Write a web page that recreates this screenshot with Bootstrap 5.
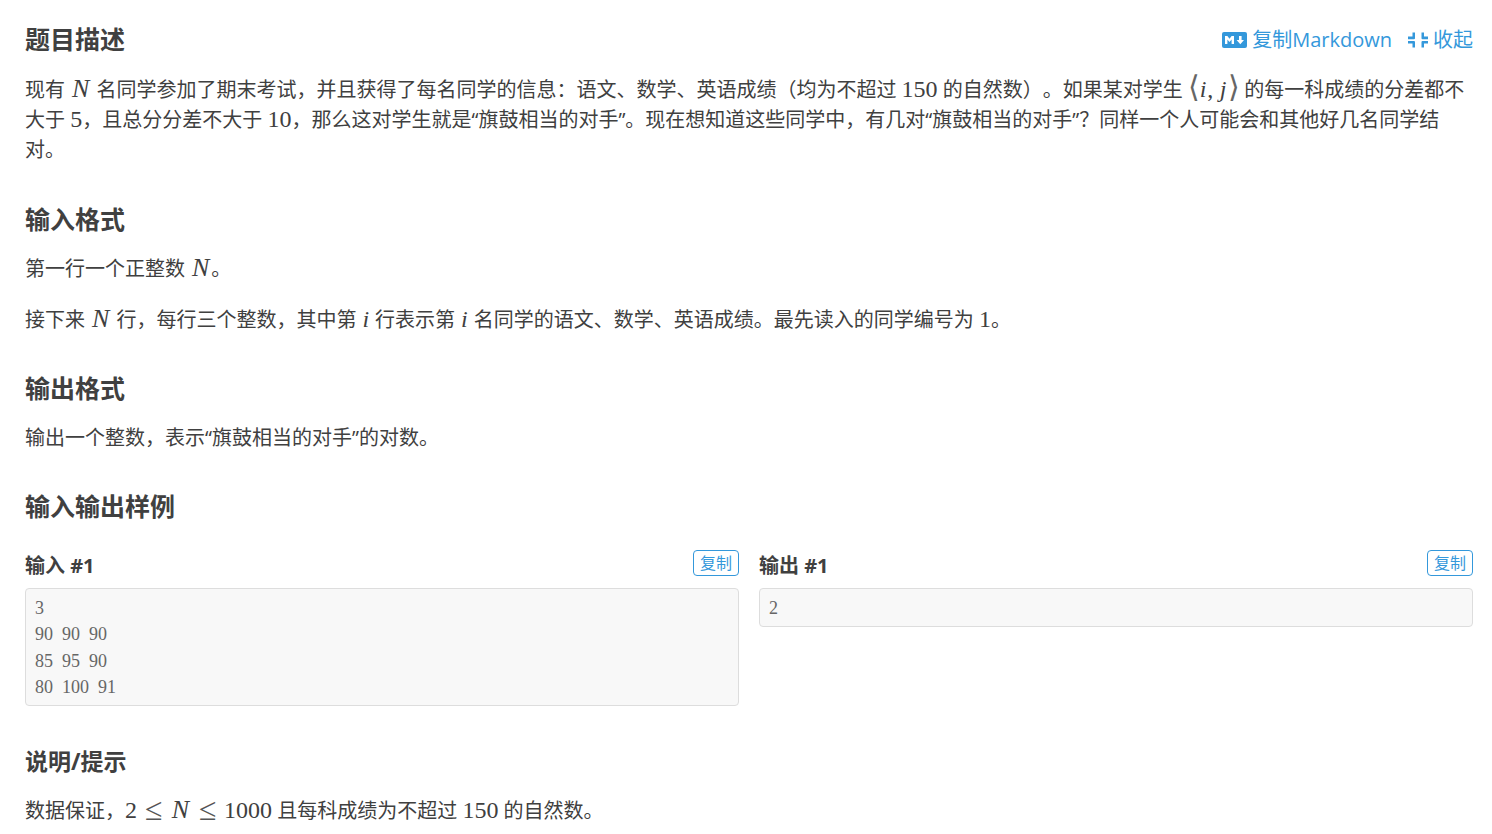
<!DOCTYPE html>
<html lang="zh">
<head>
<meta charset="utf-8">
<link href="https://cdn.jsdelivr.net/npm/bootstrap@5.3.0/dist/css/bootstrap.min.css" rel="stylesheet">
<style>
body{background:#fff;color:#404040;font-family:"Open Sans","Noto Sans CJK SC",sans-serif;font-size:20px;line-height:30px;overflow:hidden;text-spacing-trim:space-all;font-feature-settings:"chws" 0,"palt" 0}
.pg{padding:21px 19px 0 25px}
.sec-title{font-size:25px;line-height:37.5px;font-weight:700;color:#404040;margin:36px 0 14px}
.sec-after2{margin-bottom:15px}
.sec-up{margin-top:35px}
.sec-tight{font-size:23px;margin-top:37px}
.head-1{margin-bottom:15px}
.head-1 .sec-title{margin:0}
.para{margin:0 0 20px;padding-top:1px}
.mth{font-family:"Liberation Serif",serif;font-size:24px;line-height:0}
.mth i{font-style:italic}
.mi-n{display:inline-block;width:21px;font-size:26px;text-align:center;line-height:0}
.mi-i{display:inline-block;width:8.3px;text-align:center;line-height:0}
.mi-j{display:inline-block;width:10px;text-align:center;line-height:0}
.mi-p{display:inline-block;width:10.7px;text-align:left;line-height:0}
.mi-b{display:inline-block;width:11px;text-align:center;font-family:"DejaVu Sans",sans-serif;font-size:30px;line-height:0;color:#666}
.rel{display:inline-block;width:17px;margin:0 8px;text-align:center;font-size:32px;line-height:0;color:#555;vertical-align:-2px}
.tool-link{color:#3498db;text-decoration:none;display:inline-flex;align-items:center;gap:5px}
.tools{gap:16px}
.smp-row{--bs-gutter-x:20px;margin-top:25px}
.smp-title{font-size:20px;font-weight:700;line-height:29px;padding-top:1px;margin:0}
.copy-btn{font-size:16px;line-height:24px;padding:0 6px;border:1px solid #3498db;color:#3498db;background:#fff;border-radius:4px}
.code-box{margin:8px 0 0;background:#f8f8f8;border:1px solid #ddd;border-radius:4px;padding:6px 9px 5px;font-family:"Liberation Serif",serif;font-size:18px;line-height:26.25px;word-spacing:4.5px;color:#666;overflow:hidden}
</style>
<script src="https://cdn.jsdelivr.net/npm/bootstrap@5.3.0/dist/js/bootstrap.bundle.min.js"></script>
</head>
<body>
<div class="pg">
  <div class="d-flex justify-content-between align-items-center head-1">
    <h2 class="sec-title">题目描述</h2>
    <div class="d-flex tools">
      <a class="tool-link" href="#"><svg width="25" height="16" viewBox="0 0 25 16"><rect width="25" height="16" rx="2" fill="#3498db"/><path d="M3 12V4h2.4l2.1 2.8L9.6 4H12v8H9.6V7.4L7.5 10 5.4 7.4V12z M17 4h2.600v4H22l-3.700 4.200L14.600 8H17z" fill="#fff"/></svg>复制Markdown</a>
      <a class="tool-link" href="#"><svg width="20" height="16" viewBox="0 0 20 16"><path d="M0 4.500h4.500V0.500h2.500v5.800a1 1 0 0 1-1 1H0z M13.500 0.500H16v4h4v2.800h-5.500a1 1 0 0 1-1-1z M0 9h6a1 1 0 0 1 1 1v5.500H4.500v-4H0z M14.500 9H20v2.500h-4v4h-2.500V10a1 1 0 0 1 1-1z" fill="#3498db"/></svg>收起</a>
    </div>
  </div>
  <p class="para">现有 <span class="mth"><i class="mi-n">N</i></span> 名同学参加了期末考试，并且获得了每名同学的信息：语文、数学、英语成绩（均为不超过 <span class="mth">150</span> 的自然数）。如果某对学生 <span class="mth"><span class="mi-b">⟨</span><i class="mi-i">i</i><span class="mi-p">,</span><i class="mi-j">j</i><span class="mi-b">⟩</span></span> 的每一科成绩的分差都不大于 <span class="mth">5</span>，且总分分差不大于 <span class="mth">10</span>，那么这对学生就是“旗鼓相当的对手”。现在想知道这些同学中，有几对“旗鼓相当的对手”？同样一个人可能会和其他好几名同学结对。</p>
  <h2 class="sec-title sec-after2">输入格式</h2>
  <p class="para">第一行一个正整数 <span class="mth"><i class="mi-n">N</i></span>。</p>
  <p class="para">接下来 <span class="mth"><i class="mi-n">N</i></span> 行，每行三个整数，其中第 <span class="mth"><i class="mi-i">i</i></span> 行表示第 <span class="mth"><i class="mi-i">i</i></span> 名同学的语文、数学、英语成绩。最先读入的同学编号为 <span class="mth">1</span>。</p>
  <h2 class="sec-title sec-up">输出格式</h2>
  <p class="para">输出一个整数，表示“旗鼓相当的对手”的对数。</p>
  <h2 class="sec-title sec-up">输入输出样例</h2>
  <div class="row smp-row">
    <div class="col-6">
      <div class="d-flex justify-content-between align-items-start">
        <h3 class="smp-title">输入 #1</h3>
        <button class="btn copy-btn" type="button">复制</button>
      </div>
      <pre class="code-box">3
90 90 90
85 95 90
80 100 91</pre>
    </div>
    <div class="col-6">
      <div class="d-flex justify-content-between align-items-start">
        <h3 class="smp-title">输出 #1</h3>
        <button class="btn copy-btn" type="button">复制</button>
      </div>
      <pre class="code-box">2</pre>
    </div>
  </div>
  <h2 class="sec-title sec-tight">说明/提示</h2>
  <p class="para">数据保证，<span class="mth">2<span class="rel">≤</span><i class="mi-n">N</i><span class="rel">≤</span>1000</span> 且每科成绩为不超过 <span class="mth">150</span> 的自然数。</p>
</div>
</body>
</html>
